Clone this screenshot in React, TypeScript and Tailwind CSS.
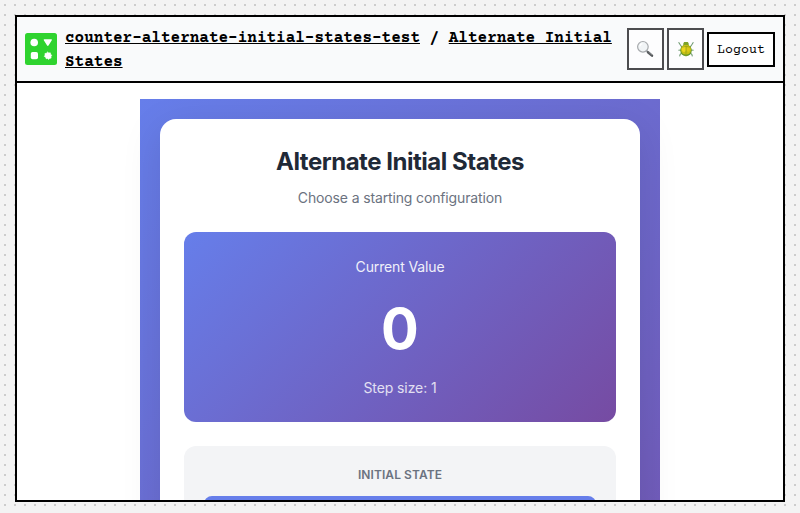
const mono = "font-['Courier_Prime','Liberation_Mono',monospace]";

function Logo() {
  return (
    <svg className="h-8 w-8 shrink-0" viewBox="0 0 32 32">
      <rect width="32" height="32" rx="2.5" fill="#2fd32f" />
      <circle cx="9.2" cy="9.5" r="3.8" fill="#fff" />
      <path d="M19.4 6.2h6.8q1.2 0 .6 1l-3.3 5.4q-.7.9-1.4 0l-3.3-5.4q-.5-1 .6-1Z" fill="#fff" />
      <rect x="5.8" y="19" width="7.2" height="7.2" rx="1.8" fill="#fff" />
      <path d="M22.6 19l1.2 1 1.5-.2.3 1.5 1.2 1-.8 1.3.1 1.5-1.5.3-1 1.1-1-1-1.5.2-.4-1.5-1.4-.8.8-1.3-.2-1.5 1.5-.4Z" fill="#fff" stroke="#fff" strokeWidth=".6" strokeLinejoin="round" />
    </svg>
  );
}

function Magnifier() {
  return (
    <svg className="mr-px h-[18px] w-[18px]" viewBox="0 0 18 18">
      <path d="M10.4 10.7l1.8 1.5" stroke="#8b9093" strokeWidth="1.6" />
      <path d="M12 12.2l4 3.4" stroke="#55585b" strokeWidth="2.5" strokeLinecap="round" />
      <path d="M12.5 12l3.4 2.9" stroke="#96999b" strokeWidth=".7" />
      <circle cx="6.9" cy="6.8" r="5.3" fill="#f1f4f6" stroke="#a6a9ac" strokeWidth="1.2" />
      <path d="M3.8 6.3q.5-2.2 2.6-2.7" stroke="#fff" strokeWidth="1.2" fill="none" />
    </svg>
  );
}

function Beetle() {
  return (
    <svg className="h-[18px] w-[18px]" viewBox="0 0 18 18">
      <g fill="none" stroke="#6f9a72" strokeWidth="1.1">
        <path d="M4.8 7L3.4 5 1.6 2.2M4 10l-2.6.2M5 13l-1.8 1.4-.6 2" />
        <path d="M13.2 7l1.4-2 1.8-2.8M14 10l2.6.2M13 13l1.8 1.4.6 2" />
      </g>
      <path d="M6.2 5.6q-.1-2.7 1-3.5h3.6q1.1.8 1 3.5Z" fill="#7da32b" />
      <ellipse cx="9" cy="10.4" rx="5.8" ry="5.9" fill="#6a9a28" />
      <ellipse cx="9" cy="9.7" rx="5" ry="4.9" fill="#c6bf14" />
      <ellipse cx="7" cy="9" rx="2.2" ry="2.9" fill="#ecd622" />
      <ellipse cx="11.3" cy="9.3" rx="1.8" ry="2.8" fill="#ddc817" />
      <path d="M4.3 7.3q4.7-1.9 9.4 0M9 6.6v9.6" fill="none" stroke="#8f9d18" strokeWidth=".7" />
    </svg>
  );
}

export default function App() {
  return (
    <div className="h-[513px] w-[800px] overflow-hidden bg-[#f3f3f3] bg-[conic-gradient(from_270deg_at_2px_2px,#ccc_90deg,transparent_90deg)] bg-[length:10px_10px] bg-[position:4px_4px] px-[15px] pt-[15px]">
      <div className="flex h-[487px] flex-col overflow-hidden border-2 border-black bg-white">
        <header className="flex h-[66px] shrink-0 items-center border-b-2 border-black bg-[#f9fafb] px-2">
          <Logo />
          <h1 className={`ml-2 min-w-0 flex-1 pt-[2px] text-[16px] leading-6 font-bold text-black ${mono}`}>
            <a className="underline">counter-alternate-initial-states-test</a> / <a className="underline">Alternate Initial States</a>
          </h1>
          <div className="flex items-center gap-[3px]">
            <button className="flex h-[42px] w-[37px] items-center justify-center border-2 border-[#4c4c4f] bg-[#fdfdfe]"><Magnifier /></button>
            <button className="flex h-[42px] w-[37px] items-center justify-center border-2 border-[#4c4c4f] bg-[#fdfdfe]"><Beetle /></button>
            <button className={`h-[35px] w-[68px] border-2 border-black bg-white pt-[3px] text-[13.33px] text-black ${mono}`}>Logout</button>
          </div>
        </header>
        <main className="flex min-h-0 flex-1 items-start justify-center overflow-hidden pt-4 font-[Inter,sans-serif]">
          <div className="h-[860px] w-[520px] shrink-0 bg-linear-[135deg,#667eea_0%,#764ba2_100%] p-5">
            <section className="h-full rounded-[16px] bg-white px-6 pt-6 text-center shadow-[0_10px_40px_rgba(0,0,0,0.1)]">
              <h2 className="pt-[2px] text-[24px] leading-[34px] font-bold tracking-[-0.48px] text-[#1f2937]">Alternate Initial States</h2>
              <p className="mt-2 text-[14px] leading-[22px] tracking-[-0.14px] text-[#6b7280]">Choose a starting configuration</p>
              <div className="mt-[23px] h-[190px] rounded-xl bg-linear-[135deg,#667eea_0%,#764ba2_100%] pt-6 text-white">
                <p className="text-[14px] leading-[22px] tracking-[-0.14px] opacity-90">Current Value</p>
                <p className="mt-[23px] text-[56px] leading-[56px] font-bold">0</p>
                <p className="mt-[20px] text-[14px] leading-[22px] tracking-[-0.1px] opacity-80">Step size: 1</p>
              </div>
              <div className="mt-6 h-[220px] rounded-xl bg-[#f3f4f6] px-5 pt-5">
                <h3 className="text-[12px] leading-[18px] font-semibold tracking-[0.08px] text-[#6b7280]">INITIAL STATE</h3>
                <div className="mt-3 h-11 rounded-lg bg-[#667eea]" />
              </div>
            </section>
          </div>
        </main>
      </div>
    </div>
  );
}
